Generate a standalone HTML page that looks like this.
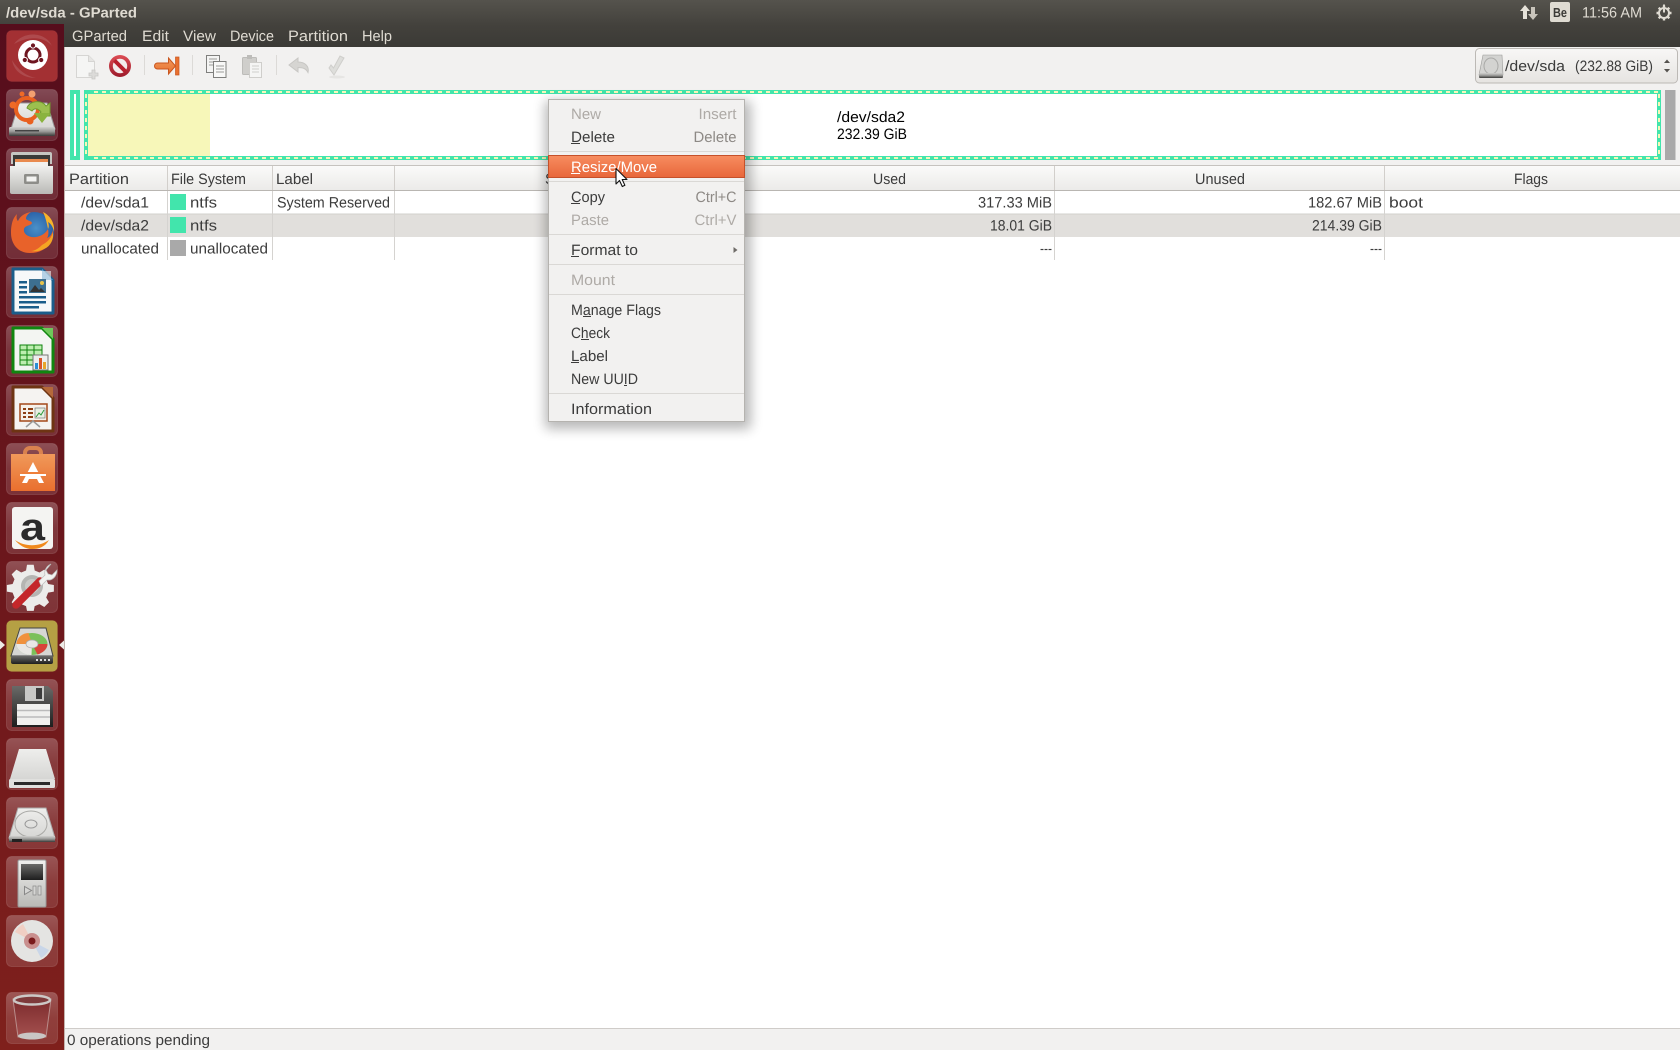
<!DOCTYPE html>
<html><head><meta charset="utf-8"><title>/dev/sda - GParted</title>
<style>
html,body{margin:0;padding:0;background:#fff;overflow:hidden}
svg{display:block}
text{font-family:"Liberation Sans",sans-serif;font-size:15px;fill:#3c3c3c;text-rendering:geometricPrecision}
.m text,text.m{fill:#dfdbd2}
.d{fill:#aeaaa6}
.s{fill:#8d8985}
</style></head><body>
<svg width="1680" height="1050" viewBox="0 0 1680 1050" xmlns="http://www.w3.org/2000/svg">
<defs>
<linearGradient id="panel" x1="0" y1="0" x2="0" y2="1"><stop offset="0" stop-color="#55534d"/><stop offset=".55" stop-color="#43413c"/><stop offset="1" stop-color="#3b3a36"/></linearGradient>
<linearGradient id="launch" x1="0" y1="0" x2="0" y2="1"><stop offset="0" stop-color="#560d1c"/><stop offset="1" stop-color="#7f201c"/></linearGradient>
<linearGradient id="tile" x1="0" y1="0" x2="0" y2="1"><stop offset="0" stop-color="#fff" stop-opacity=".25"/><stop offset=".5" stop-color="#fff" stop-opacity=".14"/><stop offset="1" stop-color="#fff" stop-opacity=".12"/></linearGradient>
<linearGradient id="hdr" x1="0" y1="0" x2="0" y2="1"><stop offset="0" stop-color="#fbfbfa"/><stop offset="1" stop-color="#ebeae8"/></linearGradient>
<linearGradient id="combo" x1="0" y1="0" x2="0" y2="1"><stop offset="0" stop-color="#f8f7f6"/><stop offset="1" stop-color="#e6e4e1"/></linearGradient>
<linearGradient id="sel" x1="0" y1="0" x2="0" y2="1"><stop offset="0" stop-color="#f78d60"/><stop offset="1" stop-color="#e8663a"/></linearGradient>
<linearGradient id="metal" x1="0" y1="0" x2="0" y2="1"><stop offset="0" stop-color="#f0f0ee"/><stop offset="1" stop-color="#b9b9b6"/></linearGradient>
<linearGradient id="light" x1="0" y1="0" x2="0" y2="1"><stop offset="0" stop-color="#eeeeec"/><stop offset="1" stop-color="#d6d6d4"/></linearGradient>
<linearGradient id="dark" x1="0" y1="0" x2="0" y2="1"><stop offset="0" stop-color="#6a6a68"/><stop offset="1" stop-color="#1e1e1e"/></linearGradient>
<linearGradient id="base" x1="0" y1="0" x2="0" y2="1"><stop offset="0" stop-color="#d0d0ce"/><stop offset=".5" stop-color="#9a9a98"/><stop offset="1" stop-color="#3a3a38"/></linearGradient>
<linearGradient id="orange" x1="0" y1="0" x2="0" y2="1"><stop offset="0" stop-color="#f0995a"/><stop offset="1" stop-color="#e96f2e"/></linearGradient>
<linearGradient id="trash" x1="0" y1="0" x2="0" y2="1"><stop offset="0" stop-color="#7c2a2c"/><stop offset="1" stop-color="#a4504f"/></linearGradient>
<linearGradient id="stopg" x1="0" y1="0" x2="0" y2="1"><stop offset="0" stop-color="#dd4d55"/><stop offset="1" stop-color="#9c1a2a"/></linearGradient>
<radialGradient id="fx" cx=".55" cy=".4" r=".6"><stop offset="0" stop-color="#4a90c8"/><stop offset="1" stop-color="#1d4f9b"/></radialGradient>
<filter id="shadow" x="-15%" y="-10%" width="130%" height="125%"><feGaussianBlur stdDeviation="6"/></filter>
</defs>

<!-- base -->
<rect width="1680" height="1050" fill="#fff"/>
<rect x="65" y="47" width="1615" height="118" fill="#f2f1f0"/>
<rect width="1680" height="47" fill="url(#panel)"/>

<!-- launcher -->
<rect x="0" y="24" width="64" height="1026" fill="url(#launch)"/>
<rect x="64" y="47" width="1" height="1003" fill="#c4b3ad"/>

<!-- panel text -->
<g class="m">
<text x="6" y="17.5" textLength="131" lengthAdjust="spacingAndGlyphs" font-weight="bold" style="font-size:14.5px">/dev/sda - GParted</text>
<text x="72" y="41" textLength="55" lengthAdjust="spacingAndGlyphs">GParted</text>
<text x="142" y="41" textLength="27" lengthAdjust="spacingAndGlyphs">Edit</text>
<text x="183" y="41" textLength="33" lengthAdjust="spacingAndGlyphs">View</text>
<text x="230" y="41" textLength="44" lengthAdjust="spacingAndGlyphs">Device</text>
<text x="288" y="41" textLength="60" lengthAdjust="spacingAndGlyphs">Partition</text>
<text x="362" y="41" textLength="30" lengthAdjust="spacingAndGlyphs">Help</text>
<text x="1582" y="17.5" textLength="60" lengthAdjust="spacingAndGlyphs">11:56 AM</text>
</g>
<!-- panel icons -->
<path d="M1525 5l5 6h-3v8h-4v-8h-3z" fill="#e6e2d9"/><path d="M1533 20l5-6h-3V7h-4v7h-3z" fill="#c8c4bb"/>
<rect x="1550" y="2" width="20" height="20" rx="2" fill="#dfdbd2"/>
<text x="1553" y="17" textLength="14" lengthAdjust="spacingAndGlyphs" font-weight="bold" style="font-size:13px;fill:#3c3b37">Be</text>
<g fill="none" stroke="#dfdbd2">
<circle cx="1664" cy="13" r="5" stroke-width="2"/>
<path d="M1664 4.5v8" stroke-width="2"/>
<path d="M1664 5.5v2.5M1664 18v2.500M1656.500 13h2.500M1669 13h2.500M1658.700 7.700l1.800 1.800M1667.500 16.500l1.800 1.800M1658.700 18.300l1.800-1.800M1667.500 9.500l1.800-1.800" stroke-width="2.400"/>
</g>

<!-- toolbar icons -->
<g>
<path d="M76.500 55.500h12l6 6v16h-18z" fill="#f5f5f4" stroke="#d6d5d3"/><path d="M88.500 55.500v6h6" fill="#e6e5e3" stroke="#d6d5d3"/>
<path d="M89 73h3v-3h3v3h3v3h-3v3h-3v-3h-3z" fill="#dcdbd9" stroke="#c8c7c5" stroke-width=".8"/>
<circle cx="120" cy="66" r="11" fill="url(#stopg)"/><circle cx="120" cy="66" r="7.200" fill="#f2ecec"/>
<path d="M114.500 60.500l11 11" stroke="#b8202e" stroke-width="4"/>
<rect x="144" y="55" width="1" height="20" fill="#dcdad7"/>
<path d="M157.500 63h11v-5l7 8-7 8v-5h-11a3 3 0 0 1 0-6z" fill="url(#orange)" stroke="#c9561f"/>
<rect x="175.500" y="57" width="3.500" height="18" fill="#e8702f" stroke="#c9561f" stroke-width=".7"/>
<rect x="192" y="55" width="1" height="20" fill="#dcdad7"/>
<rect x="206.500" y="55.500" width="13" height="17" fill="#f4f4f3" stroke="#7f7f7d"/>
<rect x="213.500" y="61.500" width="12.500" height="16" fill="#f8f8f7" stroke="#7f7f7d"/>
<path d="M209 59h8M209 62h4M209 65h4M216 66h8M216 69h8M216 72h8" stroke="#9b9b99"/>
<rect x="242.500" y="57.500" width="14" height="17" rx="1" fill="#cfcecb" stroke="#bdbcb9"/><rect x="247" y="55" width="5" height="4" fill="#bdbcb9"/>
<rect x="249.500" y="62.500" width="12" height="15" fill="#f5f5f4" stroke="#cfcecb"/>
<path d="M252 66h7M252 69h7M252 72h7" stroke="#cfcecb"/>
<rect x="276" y="55" width="1" height="20" fill="#dcdad7"/>
<path d="M298 58l-9 7 9 7v-4.500c5 0 8 1 10 5 1.500-6-3-10.500-10-10.500z" fill="#d6d5d2" stroke="#c8c7c4"/>
<path d="M329 68l5 7 10-17-4-2-6.500 12-2.500-3z" fill="#dededb" stroke="#cfcecb"/><ellipse cx="337" cy="77" rx="8" ry="1.500" fill="#e6e5e3"/>
</g>

<!-- partition bar -->
<rect x="70" y="90" width="10" height="70" fill="#42e5ac"/>
<rect x="74" y="94" width="2" height="62" fill="#fff"/>
<rect x="84" y="90" width="1577" height="70" fill="#42e5ac"/>
<rect x="88" y="94" width="1569" height="62" fill="#fff"/>
<rect x="88" y="94" width="122" height="62" fill="#f7f7b9"/>
<path d="M94 92H1660M94 158H1660M86 94V156M1659 94V156" fill="none" stroke="#f7f7b9" stroke-width="2" stroke-dasharray="4 4"/>
<rect x="1665" y="90" width="10.500" height="70" fill="#a9a9a9"/>
<text x="837" y="122" textLength="68" lengthAdjust="spacingAndGlyphs" style="fill:#000">/dev/sda2</text>
<text x="837" y="139" textLength="70" lengthAdjust="spacingAndGlyphs" style="fill:#000">232.39 GiB</text>

<!-- combo -->
<rect x="1475.500" y="48.500" width="202" height="34.500" rx="4" fill="url(#combo)" stroke="#bcb9b5"/>
<path d="M1483 55h19l1 20h-24z" fill="#d3d3d1" stroke="#9a9a98" stroke-width=".6"/>
<ellipse cx="1491" cy="66" rx="7" ry="8" fill="none" stroke="#a9a9a7"/><rect x="1479" y="73" width="24" height="5" rx="1" fill="url(#base)"/>
<text x="1505" y="71" textLength="60" lengthAdjust="spacingAndGlyphs">/dev/sda</text>
<text x="1575" y="71" textLength="78" lengthAdjust="spacingAndGlyphs">(232.88 GiB)</text>
<path d="M1664 63l3-3.500 3 3.500zM1664 69l3 3.500 3-3.500z" fill="#55524e"/>

<!-- table header -->
<rect x="65" y="165" width="1615" height="26" fill="url(#hdr)"/>
<rect x="65" y="165" width="1615" height="1" fill="#c6c3bf"/>
<rect x="65" y="190" width="1615" height="1" fill="#b9b6b2"/>
<g fill="#d2cfcb">
<rect x="167" y="166" width="1" height="24"/><rect x="272" y="166" width="1" height="24"/><rect x="394" y="166" width="1" height="24"/><rect x="724" y="166" width="1" height="24"/><rect x="1054" y="166" width="1" height="24"/><rect x="1384" y="166" width="1" height="24"/>
</g>
<text x="69" y="184" textLength="60" lengthAdjust="spacingAndGlyphs">Partition</text>
<text x="171" y="184" textLength="75" lengthAdjust="spacingAndGlyphs">File System</text>
<text x="276" y="184" textLength="37" lengthAdjust="spacingAndGlyphs">Label</text>
<text x="545" y="184" textLength="29" lengthAdjust="spacingAndGlyphs">Size</text>
<text x="873" y="184" textLength="33" lengthAdjust="spacingAndGlyphs">Used</text>
<text x="1195" y="184" textLength="50" lengthAdjust="spacingAndGlyphs">Unused</text>
<text x="1514" y="184" textLength="34" lengthAdjust="spacingAndGlyphs">Flags</text>

<!-- rows -->
<rect x="65" y="214" width="1615" height="23" fill="#e1dfdc"/>
<rect x="65" y="213.500" width="1615" height="1" fill="#d2d0cd"/>
<g fill="#d5d3d0">
<rect x="167" y="191" width="1" height="69"/><rect x="272" y="191" width="1" height="69"/><rect x="394" y="191" width="1" height="69"/><rect x="1054" y="191" width="1" height="69"/><rect x="1384" y="191" width="1" height="69"/>
</g>
<rect x="170" y="194" width="16" height="16" fill="#42e5ac"/>
<rect x="170" y="217" width="16" height="16" fill="#42e5ac"/>
<rect x="170" y="240" width="16" height="16" fill="#a9a9a9"/>
<text x="81" y="207.500" textLength="68" lengthAdjust="spacingAndGlyphs">/dev/sda1</text>
<text x="81" y="230.500" textLength="68" lengthAdjust="spacingAndGlyphs">/dev/sda2</text>
<text x="81" y="253.500" textLength="78" lengthAdjust="spacingAndGlyphs">unallocated</text>
<text x="190" y="207.500" textLength="27" lengthAdjust="spacingAndGlyphs">ntfs</text>
<text x="190" y="230.500" textLength="27" lengthAdjust="spacingAndGlyphs">ntfs</text>
<text x="190" y="253.500" textLength="78" lengthAdjust="spacingAndGlyphs">unallocated</text>
<text x="277" y="207.500" textLength="113" lengthAdjust="spacingAndGlyphs">System Reserved</text>
<text x="978" y="207.500" textLength="74" lengthAdjust="spacingAndGlyphs">317.33 MiB</text>
<text x="990" y="230.500" textLength="62" lengthAdjust="spacingAndGlyphs">18.01 GiB</text>
<text x="1040" y="253.500" textLength="12" lengthAdjust="spacingAndGlyphs">---</text>
<text x="1308" y="207.500" textLength="74" lengthAdjust="spacingAndGlyphs">182.67 MiB</text>
<text x="1312" y="230.500" textLength="70" lengthAdjust="spacingAndGlyphs">214.39 GiB</text>
<text x="1370" y="253.500" textLength="12" lengthAdjust="spacingAndGlyphs">---</text>
<text x="1389" y="207.500" textLength="34" lengthAdjust="spacingAndGlyphs">boot</text>

<!-- status -->
<rect x="65" y="1028" width="1615" height="22" fill="#f2f1f0"/>
<rect x="65" y="1028" width="1615" height="1" fill="#cfccc9"/>
<text x="67" y="1045" textLength="143" lengthAdjust="spacingAndGlyphs">0 operations pending</text>

<!-- launcher tiles -->
<g fill="url(#tile)" stroke="#fff" stroke-opacity=".12">
<rect x="6.500" y="30.500" width="51" height="51" rx="5" fill="#a33033" stroke="#c45a5a"/>
<rect x="6.500" y="89.500" width="51" height="51" rx="5"/><rect x="6.500" y="148.500" width="51" height="51" rx="5"/><rect x="6.500" y="207.500" width="51" height="51" rx="5"/>
<rect x="6.500" y="266.500" width="51" height="51" rx="5"/><rect x="6.500" y="325.500" width="51" height="51" rx="5"/><rect x="6.500" y="384.500" width="51" height="51" rx="5"/><rect x="6.500" y="443.500" width="51" height="51" rx="5"/>
<rect x="6.500" y="502.500" width="51" height="51" rx="5"/><rect x="6.500" y="561.500" width="51" height="51" rx="5"/>
<rect x="6.500" y="620.500" width="51" height="51" rx="5" fill="#b5a044" stroke="#c9b55c"/>
<rect x="6.500" y="679.500" width="51" height="51" rx="5"/><rect x="6.500" y="738.500" width="51" height="51" rx="5"/><rect x="6.500" y="797.500" width="51" height="51" rx="5"/>
<rect x="6.500" y="856.500" width="51" height="51" rx="5"/><rect x="6.500" y="915.500" width="51" height="51" rx="5"/><rect x="6.500" y="992.500" width="51" height="51" rx="5"/>
</g>

<!-- 0 Ubuntu -->
<g transform="translate(6,30)">
<path d="M8 14C18 0 40 2 46 16 38 6 22 6 8 14zM6 30c2 12 12 18 24 18-10-2-18-8-24-18z" fill="#fff" opacity=".13"/>
<circle cx="27" cy="25" r="15" fill="#fff"/>
<circle cx="27" cy="25" r="7" fill="none" stroke="#6e1520" stroke-width="3"/>
<circle cx="27" cy="15.500" r="2.600" fill="#6e1520" stroke="#fff"/><circle cx="18.800" cy="30" r="2.600" fill="#6e1520" stroke="#fff"/><circle cx="35.200" cy="30" r="2.600" fill="#6e1520" stroke="#fff"/>
</g>
<!-- 1 Updater -->
<g transform="translate(6,89)">
<path d="M13 14h28l8 26H5z" fill="url(#light)" stroke="#999"/>
<rect x="3" y="38" width="46" height="9" rx="1.500" fill="url(#base)"/><rect x="9" y="41" width="24" height="1.500" fill="#444"/>
<circle cx="21" cy="20" r="11" fill="none" stroke="#e9601f" stroke-width="4"/>
<circle cx="7" cy="16" r="3.500" fill="#ef6a26"/><circle cx="26" cy="5" r="3.500" fill="#f2a071"/><circle cx="24" cy="32" r="3.500" fill="#e9601f"/><circle cx="16" cy="5" r="2.500" fill="#ef6a26"/>
<path d="M21 19c2-7 14-9 19-2l4-3v13H31l4-4c-3-4-7-4-9-1z" fill="#9cbf4f" stroke="#6f9a2c"/>
<path d="M44 24l-8 10-8-10z" fill="#8ab33f"/>
</g>
<!-- 2 Files -->
<g transform="translate(6,148)">
<path d="M5 6a2 2 0 0 1 2-2h37a2 2 0 0 1 2 2v10H5z" fill="#c6c6c2"/>
<rect x="7" y="7" width="37" height="11" fill="#3a3a38"/>
<rect x="9" y="11" width="33" height="3" fill="#e98a4e"/><rect x="9" y="14" width="33" height="6" fill="#f2f1ee"/>
<path d="M4 18h43v26a2 2 0 0 1-2 2H6a2 2 0 0 1-2-2z" fill="url(#metal)"/>
<rect x="18" y="26" width="15" height="10" rx="1.500" fill="#8d8d89"/><rect x="20.500" y="28.500" width="10" height="5" fill="#f3f3f1"/>
</g>
<!-- 3 Firefox -->
<g transform="translate(6,207)">
<circle cx="28" cy="25" r="20" fill="url(#fx)"/>
<path d="M5 26C5 15 8 10 11 7c-1 4 0 6 1 7 2-5 7-8 13-9-3 2-5 4-5 7 2 2 6 2 6 4-1 3-7 2-8 6-1 5 5 9 12 8 5-1 9-3 12-8 1 5 0 8-1 9 3-1 5-4 6-8 1 8-4 23-23 23C12 46 5 37 5 26z" fill="#e8622a"/>
<path d="M37 5c8 4 12 12 11 20-1-6-4-9-6-10 1 3 1 5 0 7-1-6-3-13-5-17z" fill="#f7b32b"/>
<path d="M36 38c6-3 10-8 11-13 1 7-2 14-9 17-4 2-9 3-13 2 4 0 8-3 11-6z" fill="#f5a623"/>
</g>
<!-- 4 Writer -->
<g transform="translate(6,266)">
<path d="M7 3h29l11 11v33H7z" fill="#fff" stroke="#1b5d8a" stroke-width="3" stroke-linejoin="round"/>
<path d="M36 3l11 11H36z" fill="#5b9fd0"/>
<rect x="9" y="5" width="36" height="40" fill="#f2f4f5" opacity=".6"/>
<g fill="#1b5d8a"><rect x="13" y="15" width="8" height="2.500"/><rect x="13" y="20" width="8" height="2.500"/><rect x="13" y="25" width="8" height="2.500"/><rect x="13" y="30" width="27" height="2.500"/><rect x="13" y="35" width="27" height="2.500"/><rect x="13" y="40" width="20" height="2.500"/></g>
<rect x="23" y="13" width="17" height="14" fill="#3d6f90"/><path d="M24 26l5-7 4 5 2-2 4 4z" fill="#333"/><circle cx="36" cy="17" r="2" fill="#e8c34a"/>
</g>
<!-- 5 Calc -->
<g transform="translate(6,325)">
<path d="M7 3h29l11 11v33H7z" fill="#f3f5f2" stroke="#10860f" stroke-width="3" stroke-linejoin="round"/>
<path d="M36 3h11v11z" fill="#6ec95a"/>
<rect x="14" y="20" width="22" height="20" fill="#bdeeb0" stroke="#0e820e"/>
<path d="M14 25h22M14 30h22M14 35h22M21 20v20M28 20v20" stroke="#0e820e"/>
<rect x="27" y="30" width="15" height="15" fill="#eee" stroke="#777"/>
<rect x="29" y="38" width="3" height="6" fill="#2d8fd5"/><rect x="33" y="33" width="3" height="11" fill="#d9542b"/><rect x="37" y="37" width="3" height="7" fill="#e8a52c"/>
</g>
<!-- 6 Impress -->
<g transform="translate(6,384)">
<path d="M7 3h29l11 11v33H7z" fill="#f5f3f1" stroke="#6e3413" stroke-width="3" stroke-linejoin="round"/>
<path d="M36 3h11v11z" fill="#b5693a"/>
<rect x="14" y="20" width="27" height="17" fill="#f6f1ea" stroke="#a4491a" stroke-width="1.500"/>
<g fill="#8d3f15"><rect x="17" y="24" width="3" height="2"/><rect x="17" y="28" width="3" height="2"/><rect x="17" y="32" width="3" height="2"/><rect x="22" y="24" width="5" height="2"/><rect x="22" y="28" width="5" height="2"/><rect x="22" y="32" width="5" height="2"/></g>
<rect x="29" y="24" width="10" height="10" fill="#e8efe3" stroke="#666" stroke-width=".6"/><path d="M30 33l3-4 2 2 3-5" stroke="#2c9a3b" fill="none"/>
<path d="M20 43l7-6 7 6" fill="none" stroke="#999" stroke-width="1.500"/>
</g>
<!-- 7 Software -->
<g transform="translate(6,443)">
<path d="M19 16v-6a5 5 0 0 1 5-5h6a5 5 0 0 1 5 5v6" fill="none" stroke="#d9824f" stroke-width="4"/>
<path d="M5 11h44v37H5z" fill="url(#orange)"/>
<path d="M27 19l-11 21h5l2-4h8l2 4h5z" fill="#fff"/><rect x="16" y="29" width="22" height="3" fill="#ef7f3a"/><rect x="14" y="31" width="26" height="2" fill="#fff"/>
</g>
<!-- 8 Amazon -->
<g transform="translate(6,502)">
<rect x="6" y="5" width="41" height="42" rx="3" fill="#f4f4f2"/>
<text x="14" y="38" textLength="25" lengthAdjust="spacingAndGlyphs" font-weight="bold" style="font-size:38px;fill:#2b2b2b">a</text>
<path d="M9 38c10 7 24 7 34 0-4 7-10 9-17 9-7 0-13-4-17-9z" fill="#f08a1d"/>
</g>
<!-- 9 Settings -->
<g transform="translate(6,561)">
<path d="M25 5h7l1 6 5 2 5-3 5 5-3 5 2 5 6 1v7l-6 1-2 5 3 5-5 5-5-3-5 2-1 5h-7l-1-5-5-2-5 3-5-5 3-5-2-5-6-1v-7l6-1 2-5-3-5 5-5 5 3 5-2z" fill="#ececea" transform="translate(-3,-1) scale(.96)"/>
<circle cx="26" cy="25" r="11" fill="#b5b5b2"/><circle cx="26" cy="25" r="7" fill="#c9c9c6"/>
<path d="M10 44l24-24" stroke="#c4272a" stroke-width="7.500" stroke-linecap="round"/>
<path d="M33 20l6-6c-1-4 1-8 4-10l2-1-5 6 2 4 4 1 5-5c0 5-3 9-7 10l-3 0-6 6z" fill="#f2f2f0" stroke="#bbb" stroke-width=".7"/>
</g>
<!-- 10 GParted -->
<g transform="translate(6,620)">
<path d="M14 8h26l7 28H5z" fill="#d6d6d3" stroke="#444"/>
<rect x="5" y="36" width="42" height="8" rx="2" fill="url(#dark)"/>
<ellipse cx="26" cy="24" rx="15.500" ry="11" fill="#7bc05a"/>
<path d="M26 24H10.500c0-6 6-11 12-11z" fill="#f0913c"/>
<path d="M26 24H10.500c0 6 7 11 15 11z" fill="#e9e7e4"/>
<path d="M26 24h15.500c0 5-5 9-10 10.500z" fill="#d9443a"/>
<ellipse cx="26" cy="24" rx="6" ry="4" fill="#e9e7e4" stroke="#aaa" stroke-width=".7"/>
<g fill="#ddd"><rect x="30" y="39" width="2" height="2"/><rect x="34" y="39" width="2" height="2"/><rect x="38" y="39" width="2" height="2"/><rect x="42" y="39" width="2" height="2"/></g>
</g>
<path d="M0 640.500l5 4.500-5 4.500z" fill="#eceae6"/>
<path d="M64 640.500l-5 4.500 5 4.500z" fill="#eceae6"/>
<!-- 11 Floppy -->
<g transform="translate(6,679)">
<path d="M6 7h36l5 5v36H6z" fill="url(#dark)"/>
<rect x="19" y="7" width="19" height="15" fill="#c8c8c6"/><rect x="30" y="9" width="6" height="11" fill="#3c3c3c"/>
<rect x="11" y="25" width="33" height="21" fill="#f0f0ee"/><path d="M11 31.500h33M11 38h33" stroke="#bbb" stroke-width="1.500"/>
</g>
<!-- 12 Drive -->
<g transform="translate(6,738)">
<path d="M13 11h27l9 30H4z" fill="url(#light)"/>
<rect x="3" y="41" width="46" height="9" rx="1.500" fill="#e0e0de"/><rect x="8" y="44" width="36" height="3" fill="#2a2a2a"/>
</g>
<!-- 13 HDD -->
<g transform="translate(6,797)">
<path d="M12 11h28l9 30H3z" fill="url(#light)" stroke="#aaa"/>
<ellipse cx="25" cy="27" rx="16" ry="13" fill="none" stroke="#a9a9a6"/><ellipse cx="25" cy="27" rx="6" ry="4" fill="none" stroke="#999"/>
<rect x="3" y="39" width="46" height="6" fill="url(#base)"/><rect x="6" y="42" width="10" height="3" fill="#222"/>
</g>
<!-- 14 iPod -->
<g transform="translate(6,856)">
<rect x="12" y="4" width="28" height="47" rx="1.500" fill="url(#metal)" stroke="#999"/>
<rect x="15" y="8" width="22" height="16" fill="url(#dark)"/>
<path d="M18.500 30.500v8l7-4z" fill="#d5d5d3" stroke="#888"/><rect x="27" y="30" width="3" height="9" fill="#d5d5d3" stroke="#888" stroke-width=".7"/><rect x="32" y="30" width="3" height="9" fill="#d5d5d3" stroke="#888" stroke-width=".7"/>
</g>
<!-- 15 CD -->
<g transform="translate(6,915)">
<circle cx="26" cy="26" r="21" fill="#e4e4e2"/>
<path d="M26 26L9 17a21 21 0 0 1 8-8z" fill="#f0cfc4"/><path d="M26 26l17 9a21 21 0 0 1-8 8z" fill="#c9d6e8"/>
<circle cx="26" cy="26" r="8" fill="#c98f8e"/><circle cx="26" cy="26" r="3.500" fill="#7a1a1c"/>
</g>
<!-- trash -->
<g transform="translate(6,992)">
<path d="M7 7l5 38h28l5-38z" fill="url(#trash)" stroke="#b98c8a"/>
<ellipse cx="26" cy="8" rx="18" ry="4.500" fill="#7e3a3b" stroke="#ccc8c6" stroke-width="2.500"/>
<ellipse cx="26" cy="44" rx="14" ry="3.500" fill="#c9c6c4"/>
</g>

<!-- context menu -->
<rect x="545" y="101" width="206" height="328" rx="3" fill="#000" opacity=".28" filter="url(#shadow)"/>
<rect x="548.500" y="99.500" width="196" height="322" fill="#f2f1f0" stroke="#b5b3af"/>
<g fill="#dad8d5">
<rect x="549" y="151" width="195" height="1"/><rect x="549" y="181" width="195" height="1"/><rect x="549" y="234" width="195" height="1"/><rect x="549" y="264" width="195" height="1"/><rect x="549" y="294" width="195" height="1"/><rect x="549" y="393" width="195" height="1"/>
</g>
<rect x="548.500" y="155.500" width="196" height="22" fill="url(#sel)" stroke="#c5502a"/>
<text class="d" x="571" y="119" textLength="30" lengthAdjust="spacingAndGlyphs">New</text>
<text class="d" x="698.500" y="119" textLength="38" lengthAdjust="spacingAndGlyphs">Insert</text>
<text x="571" y="142" textLength="44" lengthAdjust="spacingAndGlyphs">Delete</text>
<text class="s" x="693.500" y="142" textLength="43" lengthAdjust="spacingAndGlyphs">Delete</text>
<text x="571" y="172" textLength="86" lengthAdjust="spacingAndGlyphs" style="fill:#fff">Resize/Move</text>
<text x="571" y="202" textLength="34" lengthAdjust="spacingAndGlyphs">Copy</text>
<text class="s" x="695.500" y="202" textLength="41" lengthAdjust="spacingAndGlyphs">Ctrl+C</text>
<text class="d" x="571" y="225" textLength="38" lengthAdjust="spacingAndGlyphs">Paste</text>
<text class="d" x="694.500" y="225" textLength="42" lengthAdjust="spacingAndGlyphs">Ctrl+V</text>
<text x="571" y="255" textLength="67" lengthAdjust="spacingAndGlyphs">Format to</text>
<path d="M733.500 247l4 3-4 3z" fill="#6f6c68"/>
<text class="d" x="571" y="285" textLength="44" lengthAdjust="spacingAndGlyphs">Mount</text>
<text x="571" y="315" textLength="90" lengthAdjust="spacingAndGlyphs">Manage Flags</text>
<text x="571" y="338" textLength="39" lengthAdjust="spacingAndGlyphs">Check</text>
<text x="571" y="361" textLength="37" lengthAdjust="spacingAndGlyphs">Label</text>
<text x="571" y="384" textLength="67" lengthAdjust="spacingAndGlyphs">New UUID</text>
<text x="571" y="414" textLength="81" lengthAdjust="spacingAndGlyphs">Information</text>
<!-- mnemonics -->
<g fill="#3c3c3c">
<rect x="571" y="143" width="9" height="1"/><rect x="571" y="203" width="9" height="1"/><rect x="571" y="256" width="8" height="1"/>
<rect x="583" y="316" width="8" height="1"/><rect x="581" y="339" width="8" height="1"/><rect x="571" y="362" width="8" height="1"/><rect x="624" y="385" width="3" height="1"/>
</g>
<rect x="571" y="173" width="9" height="1" fill="#fff"/>
<!-- cursor -->
<path d="M616 168.500v15.500l3.500-3.500 2.800 6 2.600-1.200-2.700-5.800h4.800z" fill="#fff" stroke="#111" stroke-width="1.100" stroke-linejoin="round"/>
</svg>
</body></html>
